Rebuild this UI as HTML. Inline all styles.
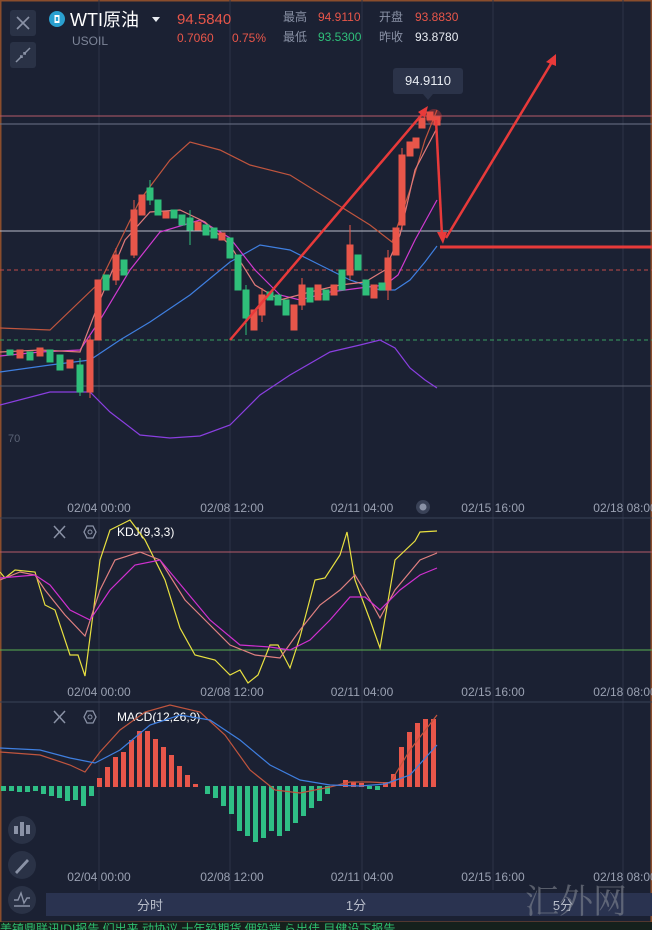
<!DOCTYPE html>
<html><head><meta charset="utf-8"><style>
html,body{margin:0;padding:0;background:#1b2133;}
body{width:652px;height:930px;overflow:hidden;position:relative;font-family:"Liberation Sans","Noto Sans CJK SC",sans-serif;}
svg{position:absolute;left:0;top:0}
</style></head><body>
<svg width="652" height="930" viewBox="0 0 652 930" xmlns="http://www.w3.org/2000/svg" font-family="Liberation Sans, Noto Sans CJK SC, sans-serif">
<rect width="652" height="930" fill="#1b2133"/>
<rect x="0.5" y="0.5" width="651" height="922" fill="none" stroke="#8a4d2c" stroke-width="2"/>
<rect x="0" y="922" width="652" height="8" fill="#15201c"/>
<text x="0" y="933" font-size="12" fill="#2fbf6e">美镇鼎联讯IDI报告 们出来   动协议   十年铅期货 佣铅端   ら出佳    目健设下报告</text>
<!-- vertical grid -->
<g stroke="#2c3347" stroke-width="1">
<line x1="99" y1="0" x2="99" y2="890"/><line x1="230" y1="0" x2="230" y2="890"/><line x1="362" y1="0" x2="362" y2="890"/><line x1="493" y1="0" x2="493" y2="890"/><line x1="623" y1="0" x2="623" y2="890"/>
<line x1="0" y1="518" x2="652" y2="518" stroke="#3a4257"/><line x1="0" y1="702" x2="652" y2="702" stroke="#3a4257"/>
</g>
<!-- main horizontal lines -->
<line x1="0" y1="116" x2="652" y2="116" stroke="#b55a6a" stroke-width="1"/>
<line x1="0" y1="124" x2="652" y2="124" stroke="#6c7488" stroke-width="1"/>
<line x1="0" y1="231" x2="652" y2="231" stroke="#b8bcc8" stroke-width="1"/>
<line x1="0" y1="270" x2="652" y2="270" stroke="#c04a4a" stroke-dasharray="4,3"/>
<line x1="0" y1="340" x2="652" y2="340" stroke="#3aa060" stroke-dasharray="4,3"/>
<line x1="0" y1="386" x2="652" y2="386" stroke="#5a6070"/>
<text x="8" y="442" font-size="11" fill="#5a6275">70</text>
<!-- BB / MA lines -->
<g fill="none" stroke-width="1.2">
<polyline stroke="#c0553e" points="0,328 50,330 100,282 140,200 170,160 190,142 220,150 250,165 290,175 330,200 370,225 392,242 410,190 425,140 437,110"/>
<polyline stroke="#8a3fe0" points="0,405 50,392 90,392 110,412 140,435 170,438 200,436 230,425 260,395 290,375 330,352 360,345 380,340 395,348 410,368 425,380 437,388"/>
<polyline stroke="#3f7fe0" points="0,372 50,365 90,360 120,340 150,322 190,295 230,262 260,245 290,250 320,265 350,280 380,290 395,290 410,280 425,262 437,246"/>
<polyline stroke="#d03ad0" points="0,356 40,352 80,350 100,320 130,270 160,232 200,220 230,238 255,270 280,295 300,300 330,292 360,288 385,285 398,275 415,240 437,200"/>
<polyline stroke="#e07a7a" points="0,352 40,350 80,352 100,300 125,240 150,212 180,210 205,222 230,245 255,285 280,300 310,292 340,285 365,282 385,270 400,235 415,170 437,128"/>
</g>
<!-- candles -->
<g id="c">
<g fill="#e8564a" stroke="#e8564a">
<rect x="17" y="350" width="6" height="8"/><rect x="37" y="348" width="6" height="8"/><rect x="67" y="360" width="6" height="8"/>
<rect x="87" y="340" width="6" height="52"/><line x1="90" y1="335" x2="90" y2="398"/>
<rect x="95" y="280" width="6" height="60"/><rect x="113" y="255" width="6" height="25"/><line x1="116" y1="248" x2="116" y2="285"/>
<rect x="131" y="210" width="6" height="45"/><line x1="134" y1="200" x2="134" y2="258"/><rect x="139" y="195" width="6" height="20"/>
<rect x="163" y="212" width="6" height="6"/><rect x="195" y="222" width="6" height="8"/><rect x="219" y="233" width="6" height="7"/>
<rect x="251" y="310" width="6" height="20"/><rect x="259" y="295" width="6" height="20"/><line x1="262" y1="288" x2="262" y2="322"/>
<rect x="291" y="305" width="6" height="25"/><rect x="299" y="285" width="6" height="20"/><line x1="302" y1="278" x2="302" y2="310"/>
<rect x="315" y="285" width="6" height="15"/><rect x="331" y="285" width="6" height="10"/>
<rect x="347" y="245" width="6" height="30"/><line x1="350" y1="225" x2="350" y2="280"/>
<rect x="371" y="285" width="6" height="13"/><rect x="385" y="258" width="6" height="32"/><line x1="388" y1="250" x2="388" y2="300"/>
<rect x="393" y="228" width="6" height="27"/><rect x="399" y="155" width="6" height="70"/><line x1="402" y1="148" x2="402" y2="230"/>
<rect x="407" y="142" width="6" height="14"/><rect x="413" y="138" width="6" height="10"/><rect x="419" y="118" width="6" height="10"/>
<rect x="427" y="112" width="6" height="8"/><rect x="434" y="117" width="6" height="8"/>
</g>
<g fill="#2fbf7a" stroke="#2fbf7a">
<rect x="7" y="350" width="6" height="5"/><rect x="27" y="352" width="6" height="8"/><rect x="47" y="350" width="6" height="12"/>
<rect x="57" y="355" width="6" height="15"/><rect x="77" y="365" width="6" height="27"/><line x1="80" y1="358" x2="80" y2="396"/>
<rect x="103" y="275" width="6" height="15"/><rect x="121" y="260" width="6" height="15"/>
<rect x="147" y="188" width="6" height="12"/><line x1="150" y1="180" x2="150" y2="205"/><rect x="155" y="200" width="6" height="15"/>
<rect x="171" y="210" width="6" height="8"/><rect x="179" y="215" width="6" height="10"/><rect x="187" y="218" width="6" height="12"/><line x1="190" y1="210" x2="190" y2="245"/>
<rect x="203" y="225" width="6" height="10"/><rect x="211" y="228" width="6" height="10"/><rect x="227" y="238" width="6" height="20"/>
<rect x="235" y="255" width="6" height="35"/><rect x="243" y="290" width="6" height="28"/><line x1="246" y1="285" x2="246" y2="335"/>
<rect x="267" y="292" width="6" height="8"/><rect x="275" y="295" width="6" height="10"/><rect x="283" y="300" width="6" height="15"/>
<rect x="307" y="288" width="6" height="14"/><rect x="323" y="290" width="6" height="10"/><rect x="339" y="270" width="6" height="20"/>
<rect x="355" y="255" width="6" height="15"/><rect x="363" y="280" width="6" height="15"/><rect x="379" y="283" width="6" height="7"/>
</g>
</g>
<circle cx="434" cy="117" r="8" fill="#e8403a" opacity="0.35"/>
<!-- red arrows -->
<g stroke="#e83a3a" stroke-width="2.5" fill="#e83a3a">
<line x1="230" y1="340" x2="424" y2="112"/><polygon points="428,106 418,112 425,118" stroke="none"/>
<line x1="436" y1="120" x2="442" y2="236"/><polygon points="443,244 437,232 447,232" stroke="none"/>
<line x1="440" y1="247" x2="652" y2="247" stroke-width="3"/>
<line x1="446" y1="238" x2="552" y2="62"/><polygon points="556,54 546,62 556,66" stroke="none"/>
</g>
<!-- tooltip -->
<rect x="393" y="68" width="70" height="26" rx="3" fill="#2b3349"/>
<polygon points="423,94 433,94 428,100" fill="#2b3349"/>
<text x="428" y="85" font-size="13" fill="#e8ecf2" text-anchor="middle">94.9110</text>
<!-- header -->
<rect x="10" y="10" width="26" height="26" rx="3" fill="#2a3246"/>
<path d="M17 17 L29 29 M29 17 L17 29" stroke="#8a92a6" stroke-width="1.6"/>
<rect x="10" y="42" width="26" height="26" rx="3" fill="#2a3246"/>
<path d="M16 62 L22 56 M20 56 L22 56 L22 58 M30 48 L24 54 M24 52 L24 54 L26 54" stroke="#8a92a6" stroke-width="1.5" fill="none"/>
<circle cx="57" cy="19" r="8" fill="#2aa0d0"/><rect x="54.5" y="15" width="5" height="8" fill="#fff"/><rect x="55.8" y="17" width="2.4" height="4" fill="#2aa0d0"/>
<text x="70" y="26" font-size="18" fill="#ffffff">WTI原油</text>
<polygon points="152,17 160,17 156,22" fill="#e8ecf2"/>
<text x="72" y="45" font-size="12" fill="#7d8598">USOIL</text>
<text x="177" y="24" font-size="15" fill="#e8564a">94.5840</text>
<text x="177" y="42" font-size="12" fill="#e8564a">0.7060</text>
<text x="232" y="42" font-size="12" fill="#e8564a">0.75%</text>
<g font-size="12">
<text x="283" y="21" fill="#8a92a6">最高</text><text x="318" y="21" fill="#e8564a">94.9110</text>
<text x="379" y="21" fill="#8a92a6">开盘</text><text x="415" y="21" fill="#e8564a">93.8830</text>
<text x="283" y="41" fill="#8a92a6">最低</text><text x="318" y="41" fill="#2fbf7a">93.5300</text>
<text x="379" y="41" fill="#8a92a6">昨收</text><text x="415" y="41" fill="#e8ecf2">93.8780</text>
</g>
<!-- x axis labels -->
<g font-size="12" fill="#9aa1b2" text-anchor="middle">
<text x="99" y="512">02/04 00:00</text><text x="232" y="512">02/08 12:00</text><text x="362" y="512">02/11 04:00</text><text x="493" y="512">02/15 16:00</text><text x="625" y="512">02/18 08:00</text>
<text x="99" y="696">02/04 00:00</text><text x="232" y="696">02/08 12:00</text><text x="362" y="696">02/11 04:00</text><text x="493" y="696">02/15 16:00</text><text x="625" y="696">02/18 08:00</text>
<text x="99" y="881">02/04 00:00</text><text x="232" y="881">02/08 12:00</text><text x="362" y="881">02/11 04:00</text><text x="493" y="881">02/15 16:00</text><text x="625" y="881">02/18 08:00</text>
</g>
<circle cx="423" cy="507" r="7" fill="#3a4257"/><circle cx="423" cy="507" r="3.5" fill="#8a92a6"/>
<!-- KDJ -->
<line x1="0" y1="552" x2="652" y2="552" stroke="#b55a6a"/>
<line x1="0" y1="650" x2="652" y2="650" stroke="#5ab050"/>
<path d="M54 526 L65 538 M65 526 L54 538" stroke="#8a92a6" stroke-width="1.5"/>
<polygon points="84,532 87,526 93,526 96,532 93,538 87,538" fill="none" stroke="#8a92a6" stroke-width="1.3"/><circle cx="90" cy="532" r="2" fill="none" stroke="#8a92a6"/>
<text x="117" y="536" font-size="12" fill="#ffffff">KDJ(9,3,3)</text>
<g fill="none" stroke-width="1.2">
<polyline stroke="#e8e040" points="0,572 5,578 15,570 35,572 45,605 55,610 70,655 78,655 85,676 100,560 110,530 130,520 145,540 165,580 180,628 195,655 215,660 230,675 240,670 248,683 258,675 270,645 278,645 290,668 300,637 315,580 325,578 340,555 347,532 355,580 370,620 380,648 395,560 415,541 420,532 437,531"/>
<polyline stroke="#e08080" points="0,580 20,572 35,575 45,590 65,615 85,636 100,590 115,560 140,552 160,560 185,600 205,620 230,645 255,655 280,658 300,630 320,605 340,590 355,575 370,600 380,618 395,590 420,560 437,553"/>
<polyline stroke="#d030d0" points="0,578 35,575 50,585 70,610 90,620 110,590 135,565 160,560 185,590 210,620 240,645 270,647 290,650 310,640 330,620 350,597 365,597 380,610 400,590 420,575 437,568"/>
</g>
<!-- MACD -->
<path d="M54 711 L65 723 M65 711 L54 723" stroke="#8a92a6" stroke-width="1.5"/>
<polygon points="84,717 87,711 93,711 96,717 93,723 87,723" fill="none" stroke="#8a92a6" stroke-width="1.3"/><circle cx="90" cy="717" r="2" fill="none" stroke="#8a92a6"/>
<text x="117" y="721" font-size="12" fill="#ffffff">MACD(12,26,9)</text>
<g fill="#e8564a">
<rect x="97" y="778" width="5" height="9"/><rect x="105" y="767" width="5" height="20"/><rect x="113" y="757" width="5" height="30"/><rect x="121" y="752" width="5" height="35"/>
<rect x="129" y="740" width="5" height="47"/><rect x="137" y="731" width="5" height="56"/><rect x="145" y="731" width="5" height="56"/><rect x="153" y="739" width="5" height="48"/>
<rect x="161" y="747" width="5" height="40"/><rect x="169" y="755" width="5" height="32"/><rect x="177" y="766" width="5" height="21"/><rect x="185" y="775" width="5" height="12"/><rect x="193" y="784" width="5" height="3"/>
<rect x="343" y="780" width="5" height="7"/><rect x="351" y="782" width="5" height="5"/><rect x="359" y="783" width="5" height="4"/><rect x="383" y="782" width="5" height="5"/>
<rect x="391" y="774" width="5" height="13"/><rect x="399" y="747" width="5" height="40"/><rect x="407" y="732" width="5" height="55"/><rect x="415" y="723" width="5" height="64"/><rect x="423" y="719" width="5" height="68"/><rect x="431" y="719" width="5" height="68"/>
</g>
<g fill="#2fbf86">
<rect x="1" y="786" width="5" height="5"/><rect x="9" y="786" width="5" height="5"/><rect x="17" y="786" width="5" height="6"/><rect x="25" y="786" width="5" height="6"/><rect x="33" y="786" width="5" height="5"/>
<rect x="41" y="786" width="5" height="8"/><rect x="49" y="786" width="5" height="10"/><rect x="57" y="786" width="5" height="12"/><rect x="65" y="786" width="5" height="15"/><rect x="73" y="786" width="5" height="14"/>
<rect x="81" y="786" width="5" height="20"/><rect x="89" y="786" width="5" height="10"/>
<rect x="205" y="786" width="5" height="8"/><rect x="213" y="786" width="5" height="12"/><rect x="221" y="786" width="5" height="20"/><rect x="229" y="786" width="5" height="28"/>
<rect x="237" y="786" width="5" height="45"/><rect x="245" y="786" width="5" height="50"/><rect x="253" y="786" width="5" height="56"/><rect x="261" y="786" width="5" height="52"/>
<rect x="269" y="786" width="5" height="45"/><rect x="277" y="786" width="5" height="50"/><rect x="285" y="786" width="5" height="45"/><rect x="293" y="786" width="5" height="37"/>
<rect x="301" y="786" width="5" height="30"/><rect x="309" y="786" width="5" height="22"/><rect x="317" y="786" width="5" height="15"/><rect x="325" y="786" width="5" height="8"/>
<rect x="367" y="786" width="5" height="3"/><rect x="375" y="786" width="5" height="4"/>
</g>
<g fill="none" stroke-width="1.2">
<polyline stroke="#c0553e" points="0,752 40,755 70,765 85,772 100,752 120,730 145,712 170,705 200,712 225,735 250,770 275,790 300,793 330,787 350,782 370,782 390,783 410,750 437,715"/>
<polyline stroke="#3f7fe0" points="0,748 40,750 70,758 95,763 120,750 150,725 180,715 210,720 240,740 270,765 300,780 330,785 360,786 385,784 410,775 437,745"/>
</g>
<!-- left bottom tools -->
<circle cx="22" cy="830" r="14" fill="#2a3246"/>
<g fill="#8a92a6"><rect x="14" y="826" width="4" height="8"/><rect x="20" y="822" width="4" height="14"/><rect x="26" y="825" width="4" height="9"/></g>
<circle cx="22" cy="865" r="14" fill="#2a3246"/>
<path d="M15 872 L27 859 L29 861 L17 874 Z" fill="#8a92a6"/>
<circle cx="22" cy="900" r="14" fill="#2a3246"/>
<path d="M14 900 L18 900 L21 893 L24 903 L27 898 L30 898 M14 906 L30 906" stroke="#8a92a6" stroke-width="1.4" fill="none"/>
<!-- tab bar -->
<rect x="46" y="893" width="606" height="23" fill="#2a3350"/>
<g font-size="13" fill="#b8bdca" text-anchor="middle">
<text x="150" y="910">分时</text><text x="356" y="910">1分</text><text x="563" y="910">5分</text>
</g>
<text x="525" y="913" font-size="34" fill="#8a8e98" opacity="0.55" font-family="Noto Serif CJK SC, serif">汇外网</text>
</svg>
</body></html>
